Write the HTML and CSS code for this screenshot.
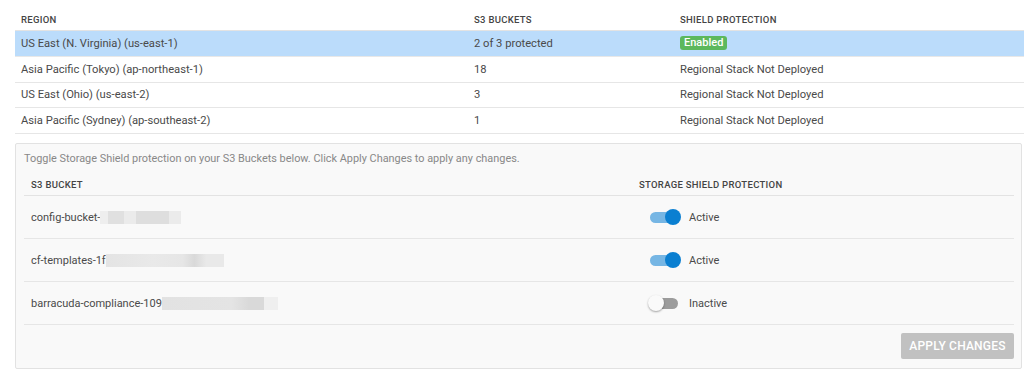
FILE: index.html
```html
<!DOCTYPE html>
<html>
<head>
<meta charset="utf-8">
<link rel="stylesheet" href="styles.css">
</head>
<body>
<div class="page">
  <div class="regions">
    <div class="rrow rhead">
      <div class="cell">REGION</div>
      <div class="cell">S3 BUCKETS</div>
      <div class="cell">SHIELD PROTECTION</div>
    </div>
    <div class="rrow selected">
      <div class="cell">US East (N. Virginia) (us-east-1)</div>
      <div class="cell">2 of 3 protected</div>
      <div class="cell"><span class="badge">Enabled</span></div>
    </div>
    <div class="rrow">
      <div class="cell">Asia Pacific (Tokyo) (ap-northeast-1)</div>
      <div class="cell">18</div>
      <div class="cell">Regional Stack Not Deployed</div>
    </div>
    <div class="rrow">
      <div class="cell">US East (Ohio) (us-east-2)</div>
      <div class="cell">3</div>
      <div class="cell">Regional Stack Not Deployed</div>
    </div>
    <div class="rrow">
      <div class="cell">Asia Pacific (Sydney) (ap-southeast-2)</div>
      <div class="cell">1</div>
      <div class="cell">Regional Stack Not Deployed</div>
    </div>
  </div>

  <div class="panel">
    <div class="intro">Toggle Storage Shield protection on your S3 Buckets below. Click Apply Changes to apply any changes.</div>
    <div class="buckets">
      <div class="brow bhead">
        <div class="cell">S3 BUCKET</div>
        <div class="cell">STORAGE SHIELD PROTECTION</div>
      </div>
      <div class="brow">
        <div class="cell name">config-bucket-<span class="blur w1"></span></div>
        <div class="cell state"><span class="toggle on"><span class="track"></span><span class="thumb"></span></span>Active</div>
      </div>
      <div class="brow">
        <div class="cell name">cf-templates-1f<span class="blur w2"></span></div>
        <div class="cell state"><span class="toggle on"><span class="track"></span><span class="thumb"></span></span>Active</div>
      </div>
      <div class="brow">
        <div class="cell name">barracuda-compliance-109<span class="blur w3"></span></div>
        <div class="cell state"><span class="toggle off"><span class="track"></span><span class="thumb"></span></span>Inactive</div>
      </div>
    </div>
    <div class="actions">
      <button class="apply">APPLY CHANGES</button>
    </div>
  </div>
</div>
</body>
</html>
```

FILE: styles.css
```css
* { box-sizing: border-box; }
html, body { margin: 0; padding: 0; background: #fff; }
body {
  font-family: Roboto, "Liberation Sans", Arial, sans-serif;
  font-size: 11.2px;
  color: #4a4a4a;
  width: 1024px;
  height: 379px;
  overflow: hidden;
}
.page { padding-left: 15px; }

.regions { display: flex; flex-direction: column; }
.rrow {
  display: grid;
  grid-template-columns: 453px 206px 1fr;
  height: 25.75px;
  align-items: center;
  border-bottom: 1px solid #e6e6e6;
}
.rrow .cell { padding-left: 6px; white-space: nowrap; }
.rhead {
  height: 31px;
  align-items: end;
  padding-bottom: 5px;
  font-size: 9.5px;
  font-weight: 500;
  color: #444;
  letter-spacing: 0.3px;
  border-bottom: 1px solid #e3e3e3;
}
.selected { background: #bbdcfb; border-bottom-color: #e8e8e8; }
.badge {
  display: inline-block;
  background: #5cb85c;
  color: #fff;
  font-size: 11px;
  font-weight: 500;
  line-height: 14px;
  padding: 0 4px;
  border-radius: 3px;
}

.panel {
  margin-top: 9px;
  width: 1007px;
  height: 226px;
  background: #f9f9f9;
  border: 1px solid #e2e2e2;
  border-radius: 2px;
  padding: 8px 7px 0 8px;
}
.intro {
  font-size: 10.9px;
  color: #888;
  line-height: 14px;
}
.buckets { margin-top: 8px; }
.brow {
  display: grid;
  grid-template-columns: 608px 1fr;
  height: 43px;
  align-items: center;
  border-bottom: 1px solid #e6e6e6;
  font-size: 11px;
}
.brow .cell { padding-left: 7px; white-space: nowrap; display: flex; align-items: center; }
.bhead {
  height: 22px;
  font-size: 9.5px;
  font-weight: 500;
  color: #444;
  letter-spacing: 0.3px;
  align-items: start;
  padding-top: 5px;
  border-bottom-color: #e3e3e3;
}
.blur {
  display: inline-block;
  height: 13px;
  filter: blur(0.5px);
}
.w1 { width: 81px; background: linear-gradient(90deg, #eeeeee 0 10%, #e0e0e0 10% 30%, #ebebeb 30% 45%, #dedede 45% 85%, #ebebeb 85%); }
.w2 { width: 118px; background: linear-gradient(90deg, #e4e4e4, #e9e9e9 40%, #e6e6e6 65%, #d9d9d9 75%, #e9e9e9 85%); }
.w3 { width: 116px; background: linear-gradient(90deg, #e2e2e2, #e4e4e4 60%, #d9d9d9 75% 88%, #efefef 88%); }

.toggle {
  position: relative;
  display: inline-block;
  width: 34px;
  height: 16px;
  margin-left: 9px;
  margin-right: 7px;
}
.toggle .track {
  position: absolute;
  left: 2px;
  top: 3px;
  width: 28px;
  height: 11px;
  border-radius: 6px;
}
.toggle .thumb {
  position: absolute;
  top: 0;
  width: 16px;
  height: 16px;
  border-radius: 50%;
}
.toggle.on .track { background: #76b6e4; }
.toggle.on .thumb { left: 17px; background: #0a7fd1; }
.toggle.off .track { background: #9c9c9c; }
.toggle.off .thumb { left: 0; background: #fafafa; box-shadow: 0 1px 2px rgba(0,0,0,0.35); }

.actions {
  display: flex;
  justify-content: flex-end;
  padding-top: 8px;
}
.apply {
  width: 113px;
  height: 26px;
  background: #c1c1c1;
  color: #fff;
  border: none;
  border-radius: 2px;
  font-family: Roboto, "Liberation Sans", Arial, sans-serif;
  font-size: 12px;
  font-weight: 500;
  letter-spacing: 0.2px;
  padding: 0;
}
```
